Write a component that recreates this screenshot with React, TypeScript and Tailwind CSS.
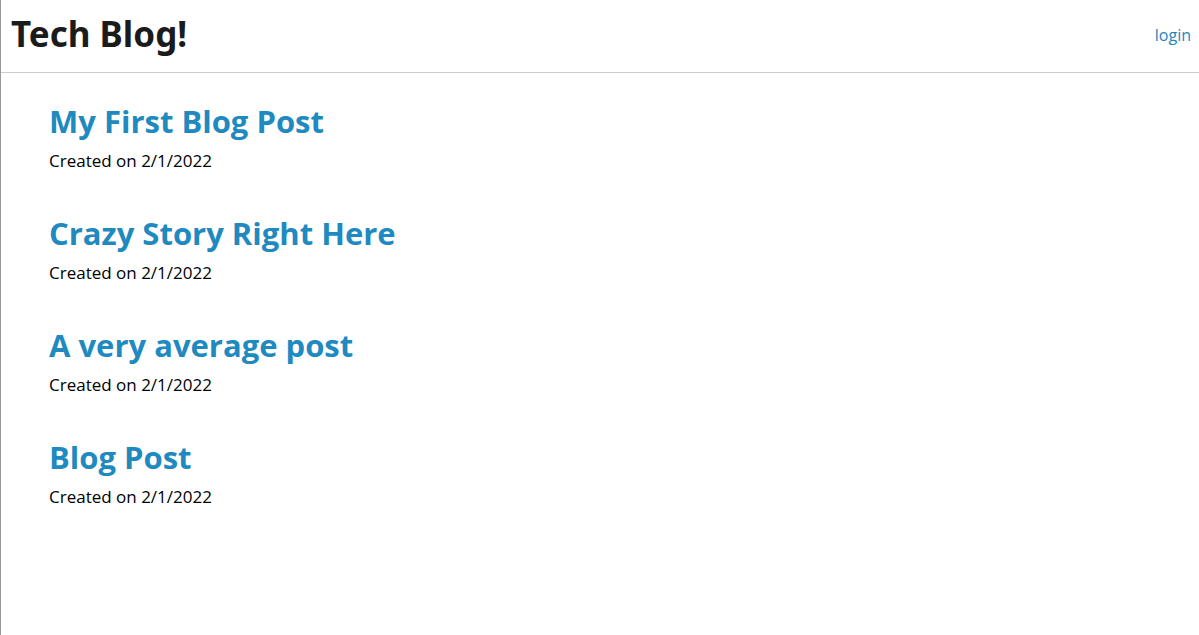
const posts = [
  { title: "My First Blog Post", created: "2/1/2022" },
  { title: "Crazy Story Right Here", created: "2/1/2022" },
  { title: "A very average post", created: "2/1/2022" },
  { title: "Blog Post", created: "2/1/2022" },
];

export default function App() {
  return (
    <div className="min-h-screen border-l border-[#999999] bg-white font-['Open_Sans','Noto_Sans',sans-serif] text-[#1b1b1b]">
      <header className="flex items-center justify-between border-b border-[#cccccc] pt-1 pr-2 pb-2 pl-[10px]">
        <h1 className="font-['Noto_Sans',sans-serif] text-[35px] leading-[60px] font-bold">Tech Blog!</h1>
        <a href="#login" className="pt-[2px] text-base text-[#1f85bd]">login</a>
      </header>
      <main className="flex flex-col gap-8 px-12 py-6">
        {posts.map((post) => (
          <article key={post.title}>
            <h2 className="text-[31px] leading-[48px] font-bold">
              <a href="#post" className="text-[#1f8abf]">{post.title}</a>
            </h2>
            <p className="text-[17px] leading-8 text-black">Created on {post.created}</p>
          </article>
        ))}
      </main>
    </div>
  );
}
